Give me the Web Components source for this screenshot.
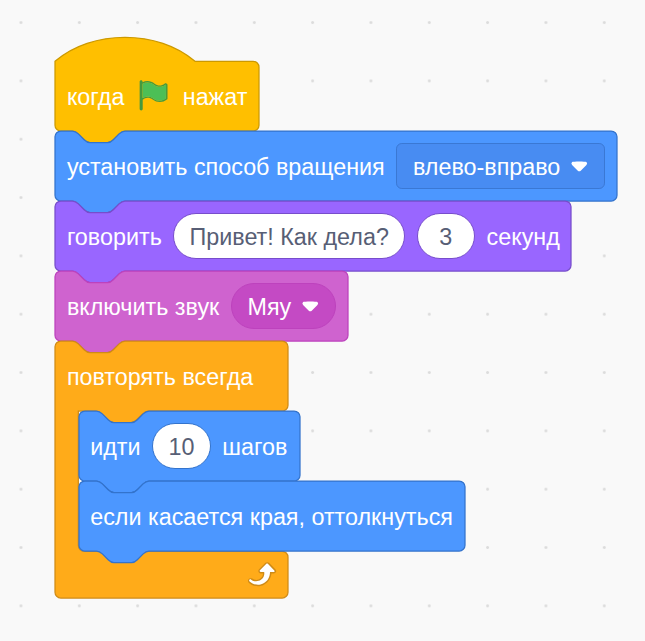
<!DOCTYPE html>
<html>
<head>
<meta charset="utf-8">
<title>Scratch blocks</title>
<style>
    html, body { margin: 0; padding: 0; }
</style>
</head>
<body>
<sb-workspace>
    <sb-hat>
        когда
        <svg width="35" height="35" viewBox="0 0 24 24">
            <path fill="#45993d" d="M20.8 3.7c-.4-.2-.9-.1-1.2.2-2 1.6-4.8 1.6-6.8 0-2.3-1.9-5.6-2.3-8.3-1v-.4c0-.6-.5-1-1-1s-1 .4-1 1v18.8c0 .5.5 1 1 1h.1c.5 0 1-.5 1-1v-6.4c1-.7 2.1-1.2 3.4-1.3 1.2 0 2.4.4 3.4 1.2 2.9 2.3 7 2.3 9.8 0 .3-.2.4-.5.4-.8V4.7c0-.5-.3-.9-.8-1zm-.3 10.2C18 16 14.4 16 11.9 14c-1.1-.9-2.5-1.4-4-1.4-1.2.1-2.3.5-3.4 1.1V4c2.5-1.4 5.5-1.1 7.7.6 2.4 1.9 5.7 1.9 8.1 0h.2s.1 0 .1.1v9.2z"/>
            <path fill="#4cbf56" d="M20.6 4.8l-.1 9.1v.1c-2.5 2-6.1 2-8.6 0-1.1-.9-2.5-1.4-4-1.4-1.2.1-2.3.5-3.4 1.1V4c2.5-1.4 5.5-1.1 7.7.6 2.4 1.9 5.7 1.9 8.1 0h.2c0 .1.1.1.1.2z"/>
        </svg>
        нажат
    </sb-hat>
    <sb-block kind="motion">
        установить способ вращения
        <sb-dropdown kind="motion">влево-вправо</sb-dropdown>
    </sb-block>
    <sb-block kind="looks">
        говорить
        <sb-input stroke="#774dcb">Привет! Как дела?</sb-input>
        <sb-input stroke="#774dcb">3</sb-input>
        секунд
    </sb-block>
    <sb-block kind="sound">
        включить звук
        <sb-dropdown kind="sound">Мяу</sb-dropdown>
    </sb-block>
    <sb-forever label="повторять всегда">
        <sb-block kind="motion">
            идти
            <sb-input stroke="#3373cc">10</sb-input>
            шагов
        </sb-block>
        <sb-block kind="motion">если касается края, оттолкнуться</sb-block>
    </sb-forever>
</sb-workspace>

<script>
// scratch-blocks units are 48 tall per stack block, here a block is 70px
const S = 70 / 48;
const u = n => +(n * S).toFixed(2);

const COLORS = {
    event: ['#ffbf00', '#cc9900'],
    motion: ['#4c97ff', '#3373cc'],
    looks: ['#9966ff', '#774dcb'],
    sound: ['#cf63cf', '#bd42bd'],
    control: ['#ffab19', '#cf8b17'],
};

// notch going right along a top edge, starting at x0
function notchTop(x0) {
    return `H${x0 + u(12)} c${u(2)},0 ${u(3)},${u(1)} ${u(4)},${u(2)} l${u(4)},${u(4)} c${u(1)},${u(1)} ${u(2)},${u(2)} ${u(4)},${u(2)} h${u(12)} c${u(2)},0 ${u(3)},${u(-1)} ${u(4)},${u(-2)} l${u(4)},${u(-4)} c${u(1)},${u(-1)} ${u(2)},${u(-2)} ${u(4)},${u(-2)}`;
}

// tab going left along a bottom edge, ending at x0 + 4 units
function tabBottom(x0) {
    return `H${x0 + u(48)} c${u(-2)},0 ${u(-3)},${u(1)} ${u(-4)},${u(2)} l${u(-4)},${u(4)} c${u(-1)},${u(1)} ${u(-2)},${u(2)} ${u(-4)},${u(2)} h${u(-12)} c${u(-2)},0 ${u(-3)},${u(-1)} ${u(-4)},${u(-2)} l${u(-4)},${u(-4)} c${u(-1)},${u(-1)} ${u(-2)},${u(-2)} ${u(-4)},${u(-2)}`;
}

const r = u(4);
const arc = (dx, dy) => `a${r},${r} 0 0,1 ${dx},${dy}`;

// text sits a little under the middle of a row, fields stay centred
const blockStyle = `
    :host {
        display: block;
        position: relative;
        width: fit-content;
        color: #fff;
    }
    svg.shape {
        position: absolute;
        left: 0;
        top: 0;
        overflow: visible;
        pointer-events: none;
    }
    .row {
        position: relative;
        display: flex;
        align-items: center;
        gap: 11.7px;
        height: 70px;
        padding: 4px 11.7px 0;
        box-sizing: border-box;
        white-space: nowrap;
    }
    ::slotted(*) { margin-top: -4px; }
`;

class ShapedBlock extends HTMLElement {
    constructor() {
        super();
        this.attachShadow({ mode: 'open' });
    }

    connectedCallback() {
        this.render();
        const w = this.offsetWidth, h = this.offsetHeight;
        const [fill, stroke] = COLORS[this.kind()];
        const shape = this.shadowRoot.querySelector('svg.shape');
        shape.setAttribute('width', w);
        shape.setAttribute('height', h);
        shape.innerHTML = `<path fill="${fill}" stroke="${stroke}" stroke-width="1.25" d="${this.path(w, h)}"/>`;
    }

    kind() { return this.getAttribute('kind'); }
}

class SbBlock extends ShapedBlock {
    render() {
        this.shadowRoot.innerHTML = `
            <style>${blockStyle}</style>
            <svg class="shape"></svg>
            <div class="row"><slot></slot></div>
        `;
    }

    path(w, h) {
        return `M0,${r} ${arc(r, -r)} ${notchTop(0)} H${w - r} ${arc(r, r)} V${h - r} ${arc(-r, r)} ${tabBottom(0)} H${r} ${arc(-r, -r)} z`;
    }
}

class SbHat extends ShapedBlock {
    kind() { return 'event'; }

    render() {
        this.shadowRoot.innerHTML = `
            <style>${blockStyle}
                :host { padding-top: ${u(16)}px; }
                ::slotted(svg) { display: block; }
            </style>
            <svg class="shape"></svg>
            <div class="row"><slot></slot></div>
        `;
    }

    path(w, h) {
        const t = u(16);
        return `M0,${t} c${u(25)},${u(-22)} ${u(71)},${u(-22)} ${u(96)},0 H${w - r} ${arc(r, r)} V${h - r} ${arc(-r, r)} ${tabBottom(0)} H${r} ${arc(-r, -r)} z`;
    }
}

class SbForever extends ShapedBlock {
    kind() { return 'control'; }

    render() {
        this.shadowRoot.innerHTML = `
            <style>${blockStyle}
                :host { width: ${u(160)}px; }
                .inner { padding-left: ${u(16)}px; }
                ::slotted(*) { margin-top: 0; }
                .foot {
                    position: relative;
                    display: flex;
                    align-items: flex-start;
                    justify-content: flex-end;
                    height: ${u(32)}px;
                    padding: 5px 11.5px 0 0;
                    box-sizing: border-box;
                }
            </style>
            <svg class="shape"></svg>
            <div class="row">${this.getAttribute('label')}</div>
            <div class="inner"><slot></slot></div>
            <div class="foot">
                <svg width="35" height="35" viewBox="0 0 24 24">
                    <path fill="#cf8b17" d="M23.3 11c-.3.6-.9 1-1.5 1h-1.6c-.1 1.3-.5 2.5-1.1 3.6-.9 1.7-2.3 3.2-4.1 4.1-1.7.9-3.6 1.2-5.5.9-1.8-.3-3.5-1.1-4.9-2.3-.7-.7-.7-1.9 0-2.6.6-.6 1.6-.7 2.3-.2H7c.9.6 1.9.9 2.9.9s1.9-.3 2.7-.9c1.1-.8 1.8-2.1 1.8-3.5h-1.5c-.9 0-1.7-.7-1.7-1.7 0-.4.2-.9.5-1.2l4.4-4.4c.7-.6 1.7-.6 2.4 0L23 9.2c.5.5.6 1.2.3 1.8z"/>
                    <path fill="#fff" d="M21.8 11h-2.6c0 1.5-.3 2.9-1 4.2-.8 1.6-2.1 2.8-3.7 3.6-1.5.8-3.3 1.1-4.9.8-1.6-.2-3.2-1-4.4-2.1-.4-.3-.4-.9-.1-1.2.3-.4.9-.4 1.2-.1 1 .7 2.2 1.1 3.4 1.1s2.3-.3 3.3-1c.9-.6 1.6-1.5 2-2.6.3-.9.4-1.8.2-2.8h-2.4c-.4 0-.7-.3-.7-.7 0-.2.1-.3.2-.4l4.4-4.4c.3-.3.7-.3 1 0L22 9.8c.3.3.4.6.3.9s-.3.3-.5.3z"/>
                </svg>
            </div>
        `;
    }

    path(w, h) {
        const x = u(16), top = 70, bottom = h - u(32);
        // inner bottom corner is concave so no background shows under the last inner block
        return `M0,${r} ${arc(r, -r)} ${notchTop(0)} H${w - r} ${arc(r, r)} V${top - r} ${arc(-r, r)} ${tabBottom(x)} H${x} V${bottom - r} a${r},${r} 0 0,0 ${r},${r} H${w - r} ${arc(r, r)} V${h - r} ${arc(-r, r)} H${r} ${arc(-r, -r)} z`;
    }
}

class SbInput extends HTMLElement {
    constructor() {
        super();
        this.attachShadow({ mode: 'open' });
        this.shadowRoot.innerHTML = `
            <style>
                :host {
                    display: flex;
                    align-items: center;
                    justify-content: center;
                    box-sizing: border-box;
                    min-width: ${u(40)}px;
                    height: ${u(32)}px;
                    padding: 4px 15px 0;
                    background: #fff;
                    border: 1.2px solid ${this.getAttribute('stroke')};
                    border-radius: ${u(16)}px;
                    color: #575e75;
                }
            </style>
            <slot></slot>
        `;
    }
}

class SbDropdown extends HTMLElement {
    constructor() {
        super();
        this.attachShadow({ mode: 'open' });
        const motion = this.getAttribute('kind') === 'motion';
        this.shadowRoot.innerHTML = `
            <style>
                :host {
                    display: flex;
                    align-items: center;
                    gap: 10px;
                    box-sizing: border-box;
                    height: ${u(32)}px;
                    padding: 4px 15.5px 0 15.5px;
                    background: ${motion ? '#488cf2' : '#c44ac4'};
                    border: 1.2px solid ${motion ? '#3a78d4' : '#bd42bd'};
                    border-radius: ${motion ? u(4) : u(16)}px;
                }
                svg { display: block; margin-top: -4px; }
            </style>
            <slot></slot>
            <svg width="18.5" height="12.8" viewBox="0 0 12.71 8.79">
                <path fill="#fff" d="M6.36,7.79a1.43,1.43,0,0,1-1-.42L1.42,3.45a1.44,1.44,0,0,1,0-2c0.56-.56,9.31-0.56,9.87,0a1.44,1.44,0,0,1,0,2L7.37,7.37A1.43,1.43,0,0,1,6.36,7.79Z"/>
            </svg>
        `;
    }
}

class SbWorkspace extends HTMLElement {
    constructor() {
        super();
        this.attachShadow({ mode: 'open' });
        this.shadowRoot.innerHTML = `
            <style>
                :host {
                    display: block;
                    box-sizing: border-box;
                    width: 645px;
                    height: 641px;
                    overflow: hidden;
                    padding: 37.6px 0 0 55.2px;
                    font: 23.33px "Liberation Sans", Arial, sans-serif;
                    background-color: #f9f9f9;
                    background-image: radial-gradient(circle, #dcdcdc 1px, transparent 1.8px);
                    background-size: 58.33px 58.33px;
                    background-position: -8.2px -6.6px;
                }
            </style>
            <slot></slot>
        `;
    }
}

// workspace first for the font, fields next so the blocks can measure themselves
customElements.define('sb-workspace', SbWorkspace);
customElements.define('sb-input', SbInput);
customElements.define('sb-dropdown', SbDropdown);
customElements.define('sb-block', SbBlock);
customElements.define('sb-hat', SbHat);
customElements.define('sb-forever', SbForever);
</script>
</body>
</html>
